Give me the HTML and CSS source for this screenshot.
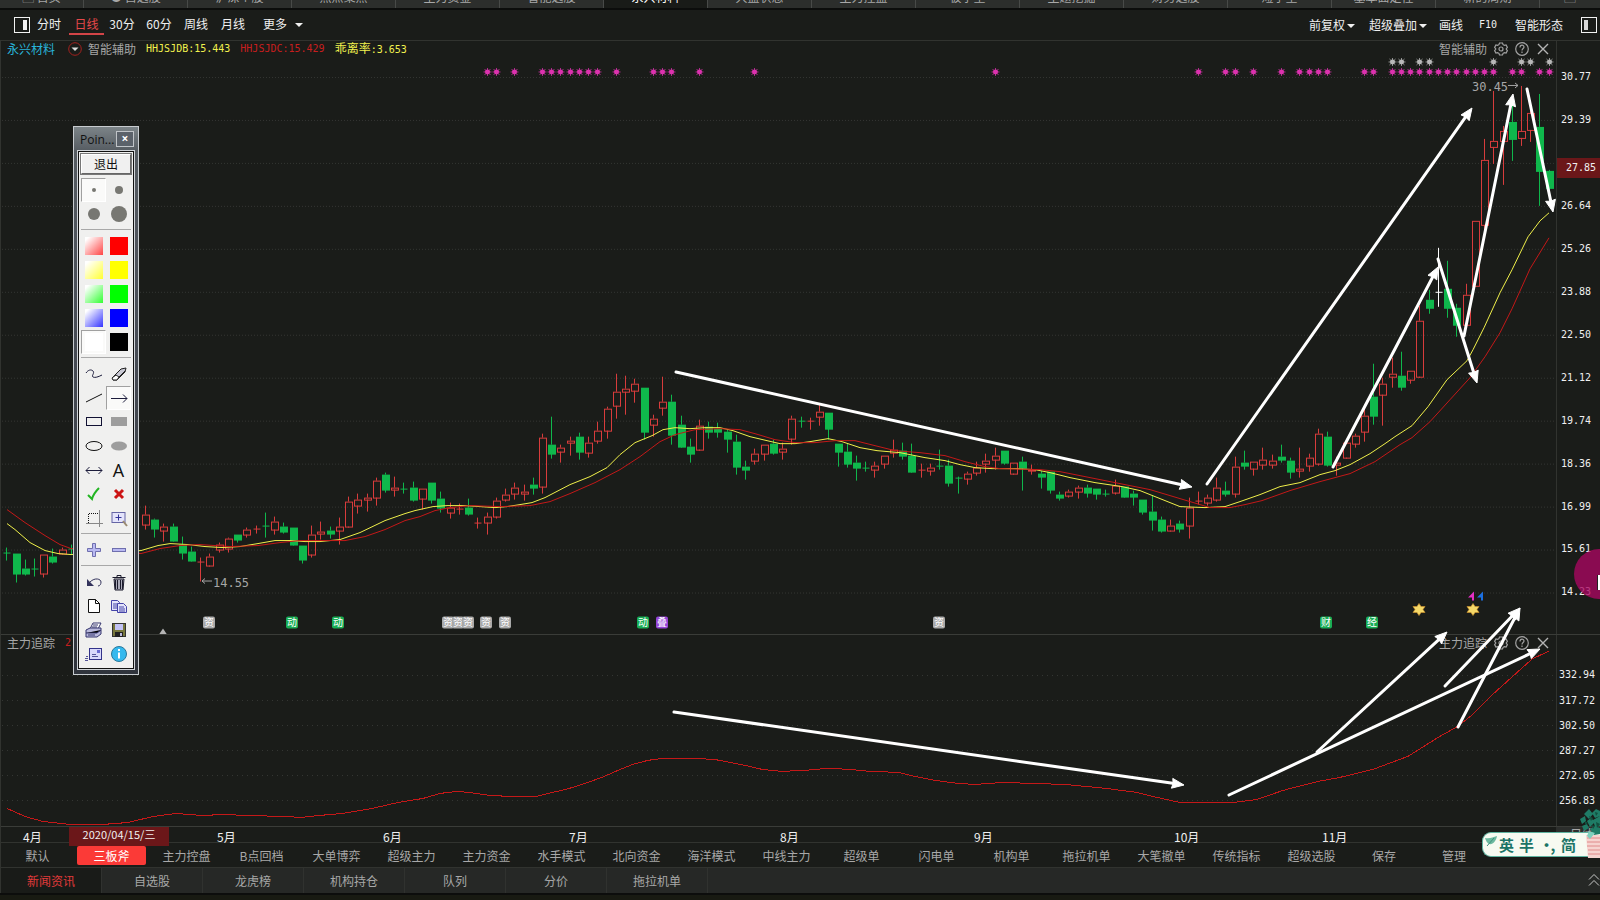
FILE: index.html
```html
<!DOCTYPE html>
<html lang="zh-CN">
<head>
<meta charset="utf-8">
<title>永兴材料 日线</title>
<link rel="stylesheet" href="styles.css">
</head>
<body>
<div class="app">
  <nav class="strip" aria-label="页面">
    <button class="strip-tab first">▢ 首页</button>
    <button class="strip-tab">● 自选股</button>
    <button class="strip-tab">沪深个股</button>
    <button class="strip-tab">热点聚焦</button>
    <button class="strip-tab">主力资金</button>
    <button class="strip-tab">智能选股</button>
    <button class="strip-tab active">永兴材料</button>
    <button class="strip-tab">大盘状态</button>
    <button class="strip-tab">主力控盘</button>
    <button class="strip-tab">板字堂</button>
    <button class="strip-tab">主题挖掘</button>
    <button class="strip-tab">财务选股</button>
    <button class="strip-tab">短学堂</button>
    <button class="strip-tab">基本面定性</button>
    <button class="strip-tab">新的周期</button>
    <button class="strip-tab">▢</button>
  </nav>

  <header class="toolbar">
    <button class="icon-btn" aria-label="左侧栏"><svg width="16" height="16"><rect x="0.5" y="0.5" width="15" height="15" fill="none" stroke="#f2f2f2"/><rect x="9" y="3" width="4" height="10" fill="#f2f2f2"/></svg></button>
    <div class="periods">
      <button>分时</button>
      <button class="current">日线</button>
      <button>30分</button>
      <button>60分</button>
      <button>周线</button>
      <button>月线</button>
      <button class="more">更多<i class="caret wide"></i></button>
    </div>
    <div class="tools">
      <button>前复权<i class="caret"></i></button>
      <button>超级叠加<i class="caret"></i></button>
      <button>画线</button>
      <button class="mono">F10</button>
      <button>智能形态</button>
      <button class="icon-btn" aria-label="右侧栏"><svg width="16" height="16"><rect x="0.5" y="0.5" width="15" height="15" fill="none" stroke="#f2f2f2"/><rect x="3" y="3" width="4" height="10" fill="#d8d8d8"/></svg></button>
    </div>
  </header>

  <main class="charts">
    <section class="panel price">
      <div class="plot">
        <svg id="price" class="canvas" viewBox="1 41 1555 594" preserveAspectRatio="none"></svg>
        <div class="legend">
          <span class="name">永兴材料</span>
          <button class="drop" aria-label="选择指标"><svg width="14" height="14"><circle cx="7" cy="7" r="6.3" fill="none" stroke="#a3221f"/><path d="M3.5 5.5h7L7 9z" fill="#ddd"/></svg></button>
          <span class="dim">智能辅助</span>
          <span class="num yellow">HHJSJDB:15.443</span>
          <span class="num red">HHJSJDC:15.429</span>
          <span class="yellow">乖离率<span class="num">:3.653</span></span>
        </div>
        <div class="panel-tools">
          <span>智能辅助</span>
          <button aria-label="设置"><svg width="14" height="14"><use href="#gear"/></svg></button>
          <button aria-label="帮助"><svg width="14" height="14"><use href="#help"/></svg></button>
          <button aria-label="关闭"><svg width="14" height="14"><use href="#close"/></svg></button>
        </div>
      </div>
      <div class="axis">
        <span>30.77</span><span>29.39</span><span>&nbsp;</span><span>26.64</span><span>25.26</span><span>23.88</span><span>22.50</span><span>21.12</span><span>19.74</span><span>18.36</span><span>16.99</span><span>15.61</span><span>14.23</span>
        <b class="price-tag">27.85</b>
      </div>
    </section>

    <section class="panel volume">
      <div class="plot">
        <svg id="flow" class="canvas" viewBox="1 636 1555 190" preserveAspectRatio="none"></svg>
        <div class="legend"><span class="dim">主力追踪</span><span class="num red">2</span></div>
        <div class="panel-tools">
          <span>主力追踪</span>
          <button aria-label="设置"><svg width="14" height="14"><use href="#gear"/></svg></button>
          <button aria-label="帮助"><svg width="14" height="14"><use href="#help"/></svg></button>
          <button aria-label="关闭"><svg width="14" height="14"><use href="#close"/></svg></button>
        </div>
      </div>
      <div class="axis"><span>332.94</span><span>317.72</span><span>302.50</span><span>287.27</span><span>272.05</span><span>256.83</span></div>
    </section>
  </main>

  <div class="dates">
    <span class="m4">4月</span><span class="date-tag">2020/04/15/三</span><span class="m5">5月</span><span class="m6">6月</span><span class="m7">7月</span><span class="m8">8月</span><span class="m9">9月</span><span class="m10">10月</span><span class="m11">11月</span><span class="unit">日线</span>
  </div>

  <nav class="templates" aria-label="模板">
    <button>默认</button><button class="active">三板斧</button><button>主力控盘</button><button>B点回档</button><button>大单博弈</button><button>超级主力</button><button>主力资金</button><button>水手模式</button><button>北向资金</button><button>海洋模式</button><button>中线主力</button><button>超级单</button><button>闪电单</button><button>机构单</button><button>拖拉机单</button><button>大笔撤单</button><button>传统指标</button><button>超级选股</button><button class="short">保存</button><button class="short">管理</button>
  </nav>

  <nav class="bottom" aria-label="资讯">
    <button class="active">新闻资讯</button><button>自选股</button><button>龙虎榜</button><button>机构持仓</button><button>队列</button><button>分价</button><button>拖拉机单</button>
    <button class="expand" aria-label="展开"><svg width="12" height="14" fill="none" stroke="#c8c8c8"><path d="M1 6.5L6 1.5l5 5M1 12.5l5-5 5 5"/></svg></button>
  </nav>
  <footer class="foot"></footer>
</div>

<svg id="ink" class="ink" viewBox="0 0 1600 900" preserveAspectRatio="none"></svg>

<aside class="palette" aria-label="画笔工具">
  <div class="palette-title"><span>Poin...</span><button aria-label="关闭">×</button></div>
  <div class="palette-body">
    <button class="exit">退出</button>
    <div class="cells">
      <button class="on" aria-label="最细"><svg viewBox="0 0 20 20"><circle cx="10" cy="10" r="2" fill="#777772"/></svg></button>
      <button aria-label="细"><svg viewBox="0 0 20 20"><circle cx="10" cy="10" r="4" fill="#777772"/></svg></button>
      <button aria-label="中"><svg viewBox="0 0 20 20"><circle cx="10" cy="10" r="6" fill="#777772"/></svg></button>
      <button aria-label="粗"><svg viewBox="0 0 20 20"><circle cx="10" cy="10" r="8" fill="#777772"/></svg></button>
    </div>
    <hr>
    <div class="cells swatches">
      <button aria-label="淡红"><i class="sw lr"></i></button><button aria-label="红"><i class="sw r"></i></button>
      <button aria-label="淡黄"><i class="sw ly"></i></button><button aria-label="黄"><i class="sw y"></i></button>
      <button aria-label="淡绿"><i class="sw lg"></i></button><button aria-label="绿"><i class="sw g"></i></button>
      <button aria-label="淡蓝"><i class="sw lb"></i></button><button aria-label="蓝"><i class="sw b"></i></button>
      <button class="on" aria-label="白"><i class="sw w"></i></button><button aria-label="黑"><i class="sw k"></i></button>
    </div>
    <hr>
    <div class="cells">
      <button aria-label="曲线"><svg viewBox="0 0 20 20" fill="none" stroke="#1c1c3c"><path d="M2 9c2-3 5-4 7-2s-2 5 0 6 5 0 9-2"/></svg></button>
      <button aria-label="橡皮"><svg viewBox="0 0 20 20" stroke="#222" stroke-linejoin="round"><path d="M4 13L12 5l5-1-1 4-8 8H4z" fill="#c9c9d4"/><path d="M3 14l4-3 3 2-2 3H4z" fill="#fff"/><path d="M10 13l6-6"/></svg></button>
      <button aria-label="直线"><svg viewBox="0 0 20 20" stroke="#111"><path d="M2 14L18 6"/></svg></button>
      <button class="on" aria-label="箭头"><svg viewBox="0 0 20 20" fill="none" stroke="#1c1c3c"><path d="M2 10.5h16M14 6.5l4 4-4 4"/></svg></button>
      <button aria-label="矩形"><svg viewBox="0 0 20 20"><rect x="2.5" y="5.5" width="15" height="8" fill="none" stroke="#111133"/></svg></button>
      <button aria-label="实心矩形"><svg viewBox="0 0 20 20"><rect x="2" y="5" width="16" height="9" fill="#9d9d9d"/></svg></button>
      <button aria-label="椭圆"><svg viewBox="0 0 20 20"><ellipse cx="10" cy="10" rx="8" ry="4.5" fill="none" stroke="#111"/></svg></button>
      <button aria-label="实心椭圆"><svg viewBox="0 0 20 20"><ellipse cx="10" cy="10" rx="8" ry="4.5" fill="#9d9d9d"/></svg></button>
      <button aria-label="双向箭头"><svg viewBox="0 0 20 20" fill="none" stroke="#1c1c3c"><path d="M2 10.5h16M14.500 7l3.500 3.500-3.500 3.500M5.500 7L2 10.500 5.500 14"/></svg></button>
      <button aria-label="文字" class="letter">A</button>
      <button aria-label="确认"><svg viewBox="0 0 20 20" fill="none" stroke="#23b523" stroke-width="2"><path d="M4 11l4 4c1-4 4-8 7-11"/></svg></button>
      <button aria-label="删除"><svg viewBox="0 0 20 20" stroke="#cc1414" stroke-width="3"><path d="M6 6l8 8M14 6l-8 8"/></svg></button>
      <button aria-label="裁剪"><svg viewBox="0 0 20 20" fill="none"><path d="M2 15.5h17M15.5 2v17" stroke="#888"/><path d="M4.5 15V5.5H15" stroke="#111" stroke-dasharray="1 1"/></svg></button>
      <button aria-label="放大"><svg viewBox="0 0 20 20" fill="none"><rect x="3" y="4.5" width="13" height="10" fill="#e4e4fb" stroke="#6565a5"/><path d="M9.5 6.5v6M6.5 9.5h6" stroke="#333399"/><path d="M14 13l4 5" stroke="#9a8a72" stroke-width="2"/></svg></button>
    </div>
    <hr>
    <div class="cells">
      <button aria-label="增加"><svg viewBox="0 0 20 20"><path d="M8.5 3.5h3v5h5v3h-5v5h-3v-5h-5v-3h5z" fill="#b9b9f2" stroke="#6f6fae"/></svg></button>
      <button aria-label="减少"><svg viewBox="0 0 20 20"><rect x="3.5" y="8.5" width="13" height="3" fill="#b9b9f2" stroke="#6f6fae"/></svg></button>
    </div>
    <hr>
    <div class="cells">
      <button aria-label="撤销"><svg viewBox="0 0 20 20"><path d="M6 10c5-5 11-3 11 0 0 2-1 4-3 4" fill="none" stroke="#33335c"/><path d="M3 7v7h7z" fill="#33335c"/></svg></button>
      <button aria-label="清空"><svg viewBox="0 0 20 20" fill="none" stroke="#1b1b2c"><path d="M3.5 5.500h13M8 5V3.500h4V5"/><path d="M5 7h10l-1 11H6z" fill="#aaaab8"/><path d="M8.500 8v9M11.500 8v9M13.500 8v9M6.500 8v9"/></svg></button>
      <button aria-label="新建"><svg viewBox="0 0 20 20"><path d="M4.500 3.500h7l4 4v9h-11z" fill="#fff" stroke="#111"/><path d="M11.500 3.500v4h4" fill="none" stroke="#111"/></svg></button>
      <button aria-label="复制"><svg viewBox="0 0 20 20" fill="#e4e4fb" stroke="#4444a8"><path d="M2.500 4.500h6l2 2v8h-8z"/><path d="M4 8h5M4 10h5M4 12h5"/><path d="M8.500 7.500h6l3 3v6h-9z"/><path d="M10 11h5M10 13h6M10 15h6"/></svg></button>
      <button aria-label="打印"><svg viewBox="0 0 20 20" stroke="#35356e"><path d="M6 9l3-6h8l-3 6z" fill="#fff"/><path d="M9 5h5M8 7h5"/><path d="M2 10l4-2h11v6l-4 3H2z" fill="#b9b9dc"/><path d="M2 13h11l4-3M4 15h7"/></svg></button>
      <button aria-label="保存"><svg viewBox="0 0 20 20"><rect x="3.500" y="3.500" width="13" height="13" fill="#77773c" stroke="#333"/><rect x="6" y="4" width="8" height="6" fill="#c2c2f4"/><rect x="6" y="12" width="8" height="5" fill="#222"/><rect x="11" y="13" width="2" height="3" fill="#b9b9dc"/></svg></button>
      <button aria-label="发送"><svg viewBox="0 0 20 20"><rect x="5.500" y="4.500" width="12" height="11" fill="#d9d9fb" stroke="#33338a"/><rect x="13" y="6" width="3" height="3" fill="#6a6ad0"/><path d="M8 10.500h4M8 12.500h6M1 14.500h3M2 12.500h2M1 16.500h3" stroke="#555599"/></svg></button>
      <button aria-label="信息"><svg viewBox="0 0 20 20"><circle cx="10" cy="10" r="7.500" fill="#35b9ee" stroke="#28789b"/><rect x="9" y="8.500" width="2" height="6" fill="#fff"/><rect x="9" y="5" width="2" height="2" fill="#fff"/></svg></button>
    </div>
  </div>
</aside>

<div class="halo"></div>

<div class="ime">
  <svg class="leaf" width="14" height="12" viewBox="0 0 14 12"><path d="M1 3c5 1 8-1 12-2-1 5-4 9-8 8C3 8 2 6 1 3z" fill="#6db9a0"/><path d="M3 11l7-8" stroke="#3d8f7c"/></svg>
  <span>英</span><span>半</span><span class="dot">·</span><span class="dot">,</span><span>简</span>
</div>
<svg class="plant" viewBox="0 0 22 50" width="22" height="50">
  <path d="M8 27h14v23H10z" fill="#f6d3cf"/><path d="M9 30h13M9 34h13M9 38h13M10 42h13M10 46h13" stroke="#e08a8a"/>
  <g fill="#1f7c66"><path d="M2 11l5-3 1 5-4 3zM6 6l5-5 4 5-4 5zM14 5l4-4 4 2v5l-5 2zM9 13l4-3 4 4-5 5zM15 12l7-4v10l-5 1zM4 18l5-2 2 4-5 3zM12 21l5-3 5 2v6l-6 1z"/></g>
  <g fill="#12503f"><path d="M11 8l4 2-2 3zM18 14l4 2-3 4zM7 13l3 2-3 2zM14 17l3 1-2 3zM17 4l3 1-2 3z"/></g>
  <path d="M11 23l6 2-5 6-3-3z" fill="#7fd0bd"/>
</svg>

<svg class="defs" aria-hidden="true"><defs>
  <symbol id="gear" viewBox="0 0 14 14"><path d="M5.500 1h3l.6 1.700 1.300.7 1.700-.4 1.300 2.400-1.200 1.600 1.200 1.600-1.300 2.400-1.700-.4-1.300.7L8.500 13h-3l-.6-1.700-1.300-.7-1.700.4L.6 8.600 1.800 7 .6 5.400 1.900 3l1.700.4 1.300-.7z" fill="none" stroke="#a2a2a2" stroke-width="1.200"/><circle cx="7" cy="7" r="2" fill="none" stroke="#a2a2a2" stroke-width="1.200"/></symbol>
  <symbol id="help" viewBox="0 0 14 14"><circle cx="7" cy="7" r="6.300" fill="none" stroke="#a2a2a2" stroke-width="1.200"/><path d="M5 5.500c0-3 4-3 4-.5C9 6.500 7 6.500 7 8.500M7 9.500V11" fill="none" stroke="#a2a2a2" stroke-width="1.200"/></symbol>
  <symbol id="close" viewBox="0 0 14 14"><path d="M2 2l10 10M12 2L2 12" stroke="#b4b4b4" stroke-width="1.400"/></symbol>
</defs></svg>
<script src="chart.js"></script>
</body>
</html>
```
FILE: styles.css
```css
* { box-sizing: border-box; }

body {
  margin: 0;
  background: #1a1c19;
  color: #f0f0f0;
  font: 12px/14px "Noto Sans CJK SC", sans-serif;
  overflow: hidden;
}

button {
  margin: 0;
  padding: 0;
  border: 0;
  background: none;
  color: inherit;
  font: inherit;
  white-space: nowrap;
}

.app {
  position: relative;
  display: flex;
  flex-direction: column;
  height: 100vh;
}

.mono, .num { font-family: "DejaVu Sans Mono", monospace; font-size: 10px; }
.dim { color: #a6a6a6; }
.yellow { color: #f1f14e; }
.red { color: #c81e1e; }

/* page tabs, scrolled mostly out of view */
.strip {
  display: flex;
  flex: none;
  height: 10px;
  background: #2c2e2c;
  border-bottom: 2px solid #0c0d0c;
  overflow: hidden;
}
.strip-tab {
  display: flex;
  align-items: flex-end;
  justify-content: center;
  width: 104px;
  padding-bottom: 4px;
  border-right: 1px solid #484a48;
  color: #a8a8a8;
}
.strip-tab.first { width: 84px; }
.strip-tab:last-child { flex: 1; border-right: 0; }
.strip-tab.active { background: #191b18; color: #fff; }

.toolbar {
  display: flex;
  flex: none;
  align-items: stretch;
  justify-content: space-between;
  height: 31px;
  padding: 0 3px 0 14px;
  border-bottom: 1px solid #31332f;
}
.icon-btn { display: flex; align-items: center; }
.periods { display: flex; flex: 1; gap: 3px; padding-left: 2px; }
.periods button { width: 34px; height: 25px; padding-top: 5px; border-bottom: 2px solid transparent; }
.periods .current { width: 35px; margin-right: -2px; color: #e5484a; border-color: #d24447; }
.periods .more { width: 40px; margin-left: 10px; }
.tools { display: flex; gap: 18px; align-items: center; }
.tools button:nth-child(1) { margin-right: -4px; }
.tools button:nth-child(2) { margin-right: -6px; }
.tools button:nth-child(3) { margin-right: -2px; }
.caret {
  display: inline-block;
  margin-left: 2px;
  vertical-align: 2px;
  border: 4px solid transparent;
  border-top-color: #f0f0f0;
  border-bottom: 0;
}
.caret.wide { margin-left: 8px; }

.charts { display: flex; flex: 1; flex-direction: column; min-height: 0; border-left: 1px solid #31332f; }
.panel { display: grid; grid-template-columns: 1fr 44px; min-height: 0; border-bottom: 1px solid #3a3c38; }
.price { flex: 595; }
.volume { flex: 191; }
.plot { display: grid; grid-template-columns: 1fr auto; grid-template-rows: 16px 1fr; min-width: 0; min-height: 0; }
.canvas { grid-area: 1 / 1 / 3 / 3; width: 100%; height: 100%; min-height: 0; }
.legend { display: flex; grid-area: 1 / 1; align-items: center; padding-left: 6px; gap: 13px; }
.legend .name { color: #29b3d8; }
.legend .drop { display: flex; }
.legend .dim { margin-left: -7px; margin-right: -3px; }
.legend .red { margin-left: -3px; }
.legend .num + .yellow { margin-left: -3px; }
.volume .legend .dim { margin: 0; }
.panel-tools { display: flex; grid-area: 1 / 2; align-items: center; gap: 7px; padding-right: 6px; color: #a6a6a6; }
.panel-tools button { display: flex; }

.axis {
  position: relative;
  display: flex;
  flex-direction: column;
  justify-content: space-between;
  padding: 29px 0 35px 4px;
  border-left: 1px solid #31332f;
  font: 10px/14px "DejaVu Sans Mono", monospace;
}
.volume .axis { padding: 33px 0 18px 2px; }
.price-tag {
  position: absolute;
  top: 117px;
  left: 0;
  right: 0;
  padding-left: 9px;
  background: #6b1719;
  font-weight: 400;
  line-height: 20px;
}

.dates {
  display: grid;
  flex: none;
  grid-template-columns: 22px 46px 100px 48px 166px 186px 211px 194px 200px 148px 1fr 44px;
  height: 16px;
  border-bottom: 1px solid #31332f;
  border-left: 1px solid #31332f;
  line-height: 19px;
}
.m4 { grid-column: 2; }
.date-tag { grid-column: 3; background: #6b1719; text-align: center; line-height: 15px; font-size: 11px; }
.m5 { grid-column: 5; }
.m6 { grid-column: 6; }
.m7 { grid-column: 7; }
.m8 { grid-column: 8; }
.m9 { grid-column: 9; }
.m10 { grid-column: 10; }
.m11 { grid-column: 11; }
.unit { grid-column: 12; padding-left: 14px; background: #2c2e2c; color: #a6a6a6; line-height: 14px; }

.templates { display: flex; flex: none; height: 25px; padding: 3px 0 2px; border-bottom: 1px solid #31332f; border-left: 1px solid #31332f; color: #a8a8a8; }
.templates button { width: 75px; padding-top: 1px; }
.templates button:first-child { width: 73px; }
.templates .active { width: 69px; margin: 0 3px; border-radius: 2px; background: #fb3a37; color: #fff; }
.templates .short { width: 70px; }

.bottom { display: flex; flex: none; height: 25px; background: #262826; border-left: 1px solid #31332f; color: #a8a8a8; }
.bottom button { width: 101px; border-right: 1px solid #30322f; }
.bottom .active { background: #191b18; color: #e23a3a; }
.bottom .expand { width: 13px; margin-left: auto; border: 0; }
.foot { flex: none; height: 7px; background: #181a12; border-top: 2px solid #0c0d0c; }

.ink { position: absolute; inset: 0; width: 100%; height: 100vh; pointer-events: none; }
.defs { position: absolute; width: 0; height: 0; }

.grid { stroke: #343633; stroke-dasharray: 1 2; }
.grid.sparse { stroke-dasharray: 1 4; }
.up { fill: none; stroke: #d83c3c; }
.down { fill: #0fb84c; stroke: #0fb84c; }
.flat { stroke: #fff; }
.ma-y { fill: none; stroke: #f0f04a; }
.ma-r { fill: none; stroke: #c41818; }
.call { fill: #a6a6a6; font: 12px "DejaVu Sans Mono", monospace; }
.badge { fill: #fff; font: 10px "Noto Sans CJK SC", sans-serif; text-anchor: middle; }

/* floating drawing palette */
.palette {
  position: absolute;
  left: 73px;
  top: 126px;
  width: 66px;
  padding: 0 4px 5px;
  border: 1px solid #c8ccd0;
  background: linear-gradient(#7c8488, #565c62 24px, #4a4f58 30%, #30343c);
  color: #111;
}
.palette-title { display: flex; align-items: center; justify-content: space-between; height: 24px; padding-left: 2px; font: 12px "Open Sans", sans-serif; }
.palette-title button { width: 18px; height: 16px; border: 1px solid #c0c4c8; color: #fff; font-weight: 700; line-height: 12px; background: #5b626a; }
.palette-body { padding: 2px; border: 1px solid #111; outline: 1px solid #d0d4d8; background: #f0f0ef; }
.exit { display: block; width: 50px; height: 20px; margin-bottom: 4px; border: 1px solid #fff; border-right-color: #666; border-bottom-color: #666; outline: 1px solid #777; background: #f0f0f0; }
.cells { display: grid; grid-template-columns: 25px 25px; grid-auto-rows: 24px; }
.cells button { display: flex; align-items: center; justify-content: center; border: 1px solid transparent; }
.cells .on { background: #fafaf9; border-color: #a0a0a0 #fff #fff #a0a0a0; }
.cells svg { width: 20px; height: 20px; }
.palette hr { height: 1px; margin: 3px 0 4px; border: 0; background: #a8a8a8; }
.cells .letter { font: 18px "Open Sans", sans-serif; }
.sw { width: 18px; height: 18px; }
.sw.r { background: #f00; }
.sw.y { background: #ff0; }
.sw.g { background: #0f0; }
.sw.b { background: #00f; }
.sw.k { background: #000; }
.sw.w { background: #fff; }
.sw.lr { background: linear-gradient(135deg, #fff 10%, #f44); }
.sw.ly { background: linear-gradient(135deg, #fff 10%, #ff3); }
.sw.lg { background: linear-gradient(135deg, #fff 10%, #3f3); }
.sw.lb { background: linear-gradient(135deg, #fff 10%, #33f); }

.halo { position: absolute; right: 0; top: 549px; width: 26px; height: 50px; border-radius: 25px 0 0 25px; background: rgba(170, 6, 98, 0.78); }
.halo::after { content: ""; position: absolute; right: 0; top: 26px; width: 2px; height: 15px; background: #fff; border-left: 1px solid #222; }

.ime {
  position: absolute;
  right: 0;
  top: 832px;
  display: flex;
  align-items: center;
  width: 118px;
  height: 25px;
  padding-left: 1px;
  border: 1px solid #5fb3a0;
  border-right: 0;
  border-radius: 9px 0 0 9px;
  background: #f7faf1;
  color: #1c7466;
  font-size: 15px;
  font-weight: 700;
  gap: 5px;
}
.ime .leaf { align-self: flex-start; margin: 2px -4px 0 0; }
.ime .dot { width: 6px; text-align: center; }
.plant { position: absolute; right: 0; top: 808px; }
```
FILE: chart.js
```js
const X0 = 6.3, STEP = 9.236;
const xi = i => Math.round(X0 + STEP * i);

// [index, kind, high, body top, body bottom, low] in plot units; u = up, d = down, f = flat
const candles = [
[0,'d',548,553,553,561],[1,'d',554,554,574,582],[2,'d',560,569,574,575],[3,'d',559,569,569,577],[4,'u',555,555,574,577],[5,'d',549,557,562,563],[6,'u',548,550,554,554],[7,'d',545,549,549,555],
[15,'u',506,515,525,529],[16,'d',519,520,529,537],[17,'u',524,527,531,541],[18,'d',524,527,541,541],[19,'d',537,545,553,559],[20,'d',547,552,561,561],[21,'u',558,562,562,582],[22,'u',554,557,566,566],[23,'u',543,545,550,552],[24,'u',538,539,549,552],[25,'d',535,535,540,542],[26,'u',528,530,535,537],[27,'u',526,529,529,534],[28,'d',513,526,526,538],[29,'u',517,522,530,534],[30,'d',523,527,532,533],[31,'d',528,528,545,545],[32,'d',546,546,560,563],[33,'u',526,535,555,557],[34,'u',522,532,534,539],[35,'d',527,531,534,538],[36,'u',518,527,531,544],[37,'u',497,502,527,527],[38,'u',494,500,506,513],[39,'u',494,498,500,511],[40,'u',478,481,498,505],[41,'d',473,475,490,492],[42,'u',477,488,490,496],[43,'d',483,489,489,494],[44,'d',482,488,500,501],[45,'u',489,489,499,509],[46,'d',483,483,500,503],[47,'d',492,499,508,512],[48,'u',503,508,513,518],[49,'u',504,509,509,515],[50,'d',499,508,514,515],[51,'u',518,523,523,529],[52,'u',513,517,523,534],[53,'u',498,501,517,518],[54,'u',489,495,500,501],[55,'u',483,488,494,499],[56,'u',485,492,494,500],[57,'d',478,485,488,494],[58,'u',434,438,487,493],[59,'d',417,445,454,458],[60,'u',445,448,452,462],[61,'u',437,441,443,455],[62,'d',433,437,452,459],[63,'u',437,443,453,457],[64,'u',422,431,441,443],[65,'u',407,409,431,438],[66,'u',374,392,406,418],[67,'u',376,389,392,414],[68,'u',379,384,391,402],[69,'d',388,388,432,439],[70,'u',415,419,425,436],[71,'u',377,402,408,415],[72,'d',395,402,435,444],[73,'d',416,425,447,447],[74,'d',439,447,454,462],[75,'u',420,426,450,450],[76,'d',422,427,432,438],[77,'d',423,429,432,437],[78,'d',430,432,439,452],[79,'d',435,442,467,474],[80,'d',461,467,470,479],[81,'u',449,454,461,464],[82,'u',445,445,454,460],[83,'d',440,444,453,454],[84,'u',443,449,452,459],[85,'u',416,419,439,444],[86,'d',417,421,421,428],[87,'u',418,421,421,430],[88,'u',405,412,417,425],[89,'d',413,413,429,439],[90,'d',444,444,452,466],[91,'d',444,452,464,467],[92,'d',456,463,468,480],[93,'d',462,468,468,472],[94,'u',462,466,470,477],[95,'u',456,456,464,468],[96,'u',440,450,453,457],[97,'d',443,451,456,459],[98,'d',444,456,472,472],[99,'u',464,470,470,478],[100,'u',464,468,471,475],[101,'d',450,466,466,470],[102,'d',460,466,483,486],[103,'d',477,478,478,494],[104,'u',472,474,479,484],[105,'u',462,468,473,475],[106,'u',454,461,464,472],[107,'u',448,456,460,469],[108,'d',451,451,463,464],[109,'u',463,463,474,474],[110,'d',457,462,468,490],[111,'u',465,470,471,474],[112,'d',471,474,477,488],[113,'d',472,472,490,493],[114,'d',492,495,498,500],[115,'u',490,492,496,497],[116,'u',486,488,492,498],[117,'d',485,488,493,497],[118,'d',489,489,494,499],[119,'d',490,494,494,497],[120,'u',480,486,493,494],[121,'d',487,487,497,497],[122,'d',491,494,497,505],[123,'d',500,500,512,514],[124,'d',496,512,520,530],[125,'d',517,520,531,532],[126,'u',520,526,531,531],[127,'d',521,524,529,532],[128,'u',498,508,526,538],[129,'u',492,501,501,505],[130,'u',495,498,503,505],[131,'u',478,488,500,501],[132,'d',482,491,494,496],[133,'u',457,467,494,497],[134,'d',451,463,466,469],[135,'u',462,462,469,475],[136,'u',448,460,465,469],[137,'u',455,461,465,468],[138,'d',445,457,460,462],[139,'d',458,461,472,478],[140,'u',448,469,471,477],[141,'u',454,458,466,471],[142,'u',429,434,464,465],[143,'d',432,437,465,466],[144,'u',457,463,465,475],[145,'u',443,443,458,458],[146,'u',434,436,444,447],[147,'u',405,416,432,441],[148,'d',364,397,416,424],[149,'u',378,384,395,425],[150,'u',358,374,377,387],[151,'d',352,376,387,390],[152,'u',371,371,380,383],[153,'u',306,321,377,377],[154,'d',290,300,308,313],[155,'f',248,292,292,307],[156,'d',261,289,308,317],[157,'d',304,308,325,336],[158,'u',284,295,325,325],[159,'u',221,221,286,286],[160,'u',139,160,225,229],[161,'u',91,141,147,163],[162,'u',126,131,141,184],[163,'d',100,122,139,160],[164,'u',86,131,138,145],[165,'u',111,113,130,141],[166,'d',94,127,171,205],[167,'d',170,171,188,200]];

const yellow = '7,524 15,530 30,543 45,551 58,554 71,555 141,551 158,546 170,544 188,545 205,547 222,548 240,547 258,544 275,541 290,541 305,542 320,542 340,540 360,533 385,521 405,514 415,511 433,507 447,506 465,506 480,507 495,508 507,507 520,505 532,503 545,498 570,485 590,477 607,468 620,455 635,443 652,436 663,430 675,428 690,429 705,428 720,428 733,431 750,437 767,441 780,444 795,444 810,442 828,439 842,442 860,448 877,451 900,453 925,458 945,461 960,465 975,468 992,469 1015,469 1035,470 1050,473 1070,478 1095,483 1122,487 1140,491 1160,499 1180,507 1205,508 1225,507 1240,502 1260,495 1280,487 1300,483 1320,475 1335,471 1350,465 1370,454 1385,444 1395,437 1412,426 1428,407 1447,380 1467,361 1473,350 1484,328 1500,293 1512,270 1528,237 1540,221 1549,213';
const red = '7,510 25,523 45,536 60,545 71,549 141,554 160,549 180,546 200,545 230,547 258,546 280,543 300,541 320,541 345,541 365,537 385,530 405,521 420,517 435,511 450,508 470,506 500,507 530,506 550,502 570,494 595,483 620,470 640,457 660,442 675,435 695,430 720,429 740,430 755,434 775,440 795,443 815,443 835,441 855,441 875,446 895,451 920,453 945,456 965,462 985,467 1000,469 1040,470 1060,472 1090,478 1120,484 1150,490 1170,496 1190,502 1210,508 1230,508 1245,505 1262,501 1290,491 1320,482 1350,474 1375,462 1400,445 1412,438 1430,422 1450,400 1470,378 1485,357 1500,333 1512,309 1530,269 1549,238';
const flow = '7,809 25,817 43,822 71,825 102,825 128,823 153,817 176,814 202,816 224,815 247,816 286,817 301,818 319,816 342,814 372,809 398,803 423,799 440,794 457,792 469,793 490,796 510,797 536,797 552,793 566,790 585,784 602,778 618,771 633,765 648,761 663,759 690,759 714,760 730,763 745,766 762,770 781,772 805,771 827,769 850,770 870,772 898,773 915,777 935,781 958,784 975,785 1004,783 1030,784 1065,785 1106,789 1137,793 1157,798 1180,803 1234,803 1257,800 1283,791 1318,782 1340,778 1373,770 1408,757 1440,737 1458,727 1473,715 1493,695 1513,677 1532,660 1549,652';

let s = '<g shape-rendering="crispEdges">';
for (let k = 0; k < 13; k++) s += `<path class="grid" d="M2 ${77.5 + 43 * k}H1554"/>`;
for (const [i, k, h, t, b, l] of candles) {
  const x = xi(i) + .5, c = k === 'u' ? 'up' : k === 'd' ? 'down' : 'flat';
  if (t === b) s += `<path class="${c}" d="M${x} ${h}V${l}M${x - 3} ${t + .5}h7"/>`;
  else {
    s += `<path class="${c}" d="M${x} ${h}V${t}M${x} ${b}V${l + 1}"/>`;
    s += `<rect class="${c}" x="${x - 3}" y="${t + .5}" width="7" height="${b - t}"/>`;
  }
}
s += `<polyline class="ma-y" points="${yellow}"/><polyline class="ma-r" points="${red}"/></g>`;

const burst = (i, y, c) => {
  const x = xi(i) + .5;
  return `<path d="M${x - 4} ${y}h8M${x} ${y - 4}v8M${x - 3} ${y - 3}l6 6M${x + 3} ${y - 3}l-6 6" stroke="${c}" opacity=".75"/><circle cx="${x}" cy="${y}" r="2.5" fill="${c}"/>`;
};
const signals = [52,53,55,58,59,60,61,62,63,64,66,70,71,72,75,81,107,129,132,133,135,138,140,141,142,143,147,148,150,151,152,153,154,155,156,157,158,159,160,161,163,164,166,167];
for (const i of signals) s += burst(i, 72, '#dc32ae');
for (const i of [150,151,153,154,161,164,165,167]) s += burst(i, 62, '#b8b8b8');

for (const [x, ch, c] of [[209,'资','#a9a9a9'],[292,'动','#18ad54'],[338,'动','#18ad54'],[448,'资','#a9a9a9'],[458,'资','#a9a9a9'],[468,'资','#a9a9a9'],[486,'资','#a9a9a9'],[505,'资','#a9a9a9'],[643,'动','#18ad54'],[662,'叠','#9645d8'],[939,'资','#a9a9a9'],[1326,'财','#18ad54'],[1372,'经','#18ad54']])
  s += `<rect x="${x - 6}" y="617" width="12" height="12" rx="2" fill="${c}"/><text class="badge" x="${x}" y="627">${ch}</text>`;
for (const x of [1419, 1473])
  s += `<path d="M${x} 604l2 3h4l-2 3 2 3h-4l-2 3-2-3h-4l2-3-2-3h4z" fill="#f5d868" stroke="#c98f2c" stroke-width=".7"/>`;
s += '<path d="M1474 592v9h-2v-3h-4z" fill="#e32fc4"/><path d="M1483 592v9h-2v-3h-4z" fill="#1b6fe0"/>';
s += '<path d="M159 635l4-6 4 6z" fill="#b5b5b5"/>';
s += '<text class="call" x="213" y="587">14.55</text><path d="M202 581.5h10M205 579l-3 2.5 3 2.5" stroke="#a6a6a6" fill="none"/>';
s += '<text class="call" x="1472" y="91">30.45</text><path d="M1508 85.5h10M1515 83l3 2.5-3 2.5" stroke="#a6a6a6" fill="none"/>';
document.getElementById('price').innerHTML = s;

s = '<g shape-rendering="crispEdges">';
for (let k = 0; k < 6; k++) s += `<path class="grid sparse" d="M2 ${676.5 + 25 * k}H1554"/>`;
s += `<polyline class="ma-r" points="${flow}"/></g>`;
document.getElementById('flow').innerHTML = s;

const strokes = [[676,372,1192,487],[1207,484,1472,108],[1333,467,1438,267],[1438,259,1477,383],[1464,336,1513,94],[1527,89,1553,212],[674,712,1184,785],[1229,795,1540,649],[1317,752,1447,632],[1445,686,1520,608],[1458,727,1520,608]];
s = '';
for (const [a, b, c, d] of strokes) {
  const n = Math.hypot(c - a, d - b), ux = (c - a) / n, uy = (d - b) / n;
  const p = (t, w) => `${(c - ux * t - uy * w).toFixed(1)} ${(d - uy * t + ux * w).toFixed(1)}`;
  s += `<path d="M${a} ${b}L${p(6, 0)}" stroke="#fff" stroke-width="3" stroke-linecap="round"/><path d="M${p(0, 0)}L${p(12, 5)}L${p(11, 0)}L${p(12, -5)}z" fill="#fff" stroke="#fff" stroke-linejoin="round"/>`;
}
document.getElementById('ink').innerHTML = s;
```
